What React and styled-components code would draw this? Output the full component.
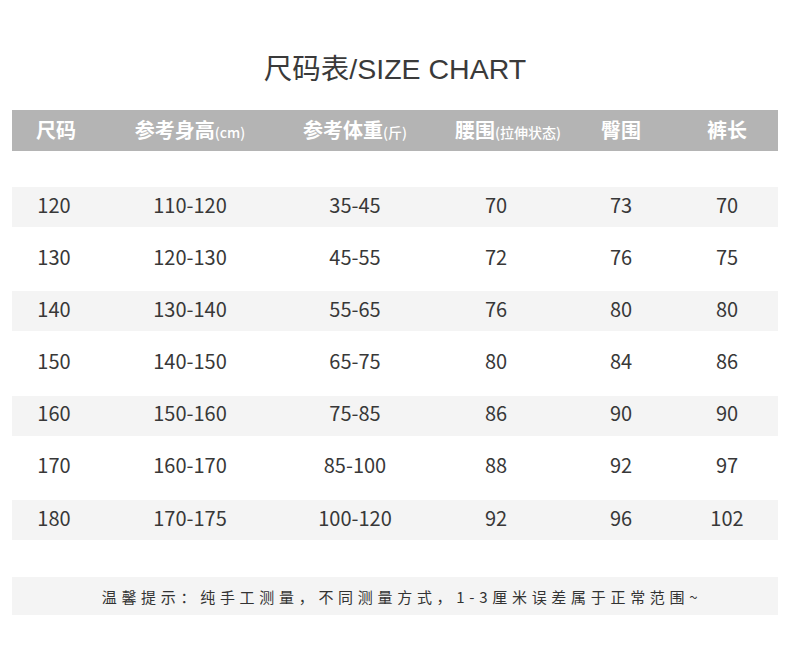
import React from 'react';
import styled, { createGlobalStyle } from 'styled-components';

const GlobalStyle = createGlobalStyle`
    body {
        margin: 0;
        background: #ffffff;
        font-family: "Noto Sans CJK SC", "Noto Sans", sans-serif;
    }
`;

const COLS = '84px 188px 142px 140px 110px 102px';

const Page = styled.div`
    width: 790px;
    height: 648px;
    padding: 48px 12px 0;
    box-sizing: border-box;
    display: flex;
    flex-direction: column;
`;

const Title = styled.h1`
    margin: 0;
    height: 40px;
    line-height: 42px;
    text-align: center;
    font-family: "Liberation Sans", "Noto Sans CJK SC", sans-serif;
    font-size: 28.5px;
    font-weight: 400;
    color: #3a3a3a;
`;

const HeaderBar = styled.div`
    margin-top: 22px;
    height: 41px;
    background: #b4b4b4;
    display: grid;
    grid-template-columns: ${COLS};
    align-items: center;
`;

const HeadCell = styled.div`
    text-align: center;
    color: #ffffff;
    font-size: 20px;
    font-weight: 700;
    white-space: nowrap;
    padding-left: ${p => p.shift || 0}px;
    padding-bottom: 2px;
`;

const Small = styled.span`
    font-size: 14px;
    font-weight: 500;
`;

const Rows = styled.div`
    margin-top: 36px;
    display: flex;
    flex-direction: column;
    gap: 12.2px;
`;

const Row = styled.div`
    height: 40px;
    display: grid;
    grid-template-columns: ${COLS};
    align-items: center;
    background: ${p => (p.shaded ? '#f4f4f4' : 'transparent')};
`;

const Cell = styled.div`
    text-align: center;
    font-size: 20px;
    line-height: 24px;
    padding-bottom: 5px;
    color: #383838;
`;

const Note = styled.div`
    margin-top: 37px;
    height: 38px;
    background: #f4f4f4;
    display: flex;
    align-items: center;
    justify-content: center;
    padding-left: 14px;
    font-size: 15px;
    letter-spacing: 4.7px;
    color: #333333;
`;

const data = [
    ['120', '110-120', '35-45', '70', '73', '70'],
    ['130', '120-130', '45-55', '72', '76', '75'],
    ['140', '130-140', '55-65', '76', '80', '80'],
    ['150', '140-150', '65-75', '80', '84', '86'],
    ['160', '150-160', '75-85', '86', '90', '90'],
    ['170', '160-170', '85-100', '88', '92', '97'],
    ['180', '170-175', '100-120', '92', '96', '102'],
];

const App = () => {
    return (
        <Page>
            <GlobalStyle />
            <Title>尺码表/SIZE CHART</Title>
            <HeaderBar>
                <HeadCell shift={4}>尺码</HeadCell>
                <HeadCell>参考身高<Small>(cm)</Small></HeadCell>
                <HeadCell>参考体重<Small>(斤)</Small></HeadCell>
                <HeadCell shift={24}>腰围<Small>(拉伸状态)</Small></HeadCell>
                <HeadCell>臀围</HeadCell>
                <HeadCell>裤长</HeadCell>
            </HeaderBar>
            <Rows>
                {data.map((row, i) => (
                    <Row key={row[0]} shaded={i % 2 === 0}>
                        {row.map((v, j) => <Cell key={j}>{v}</Cell>)}
                    </Row>
                ))}
            </Rows>
            <Note>温馨提示：纯手工测量，不同测量方式，1-3厘米误差属于正常范围~</Note>
        </Page>
    );
}

export default App;
